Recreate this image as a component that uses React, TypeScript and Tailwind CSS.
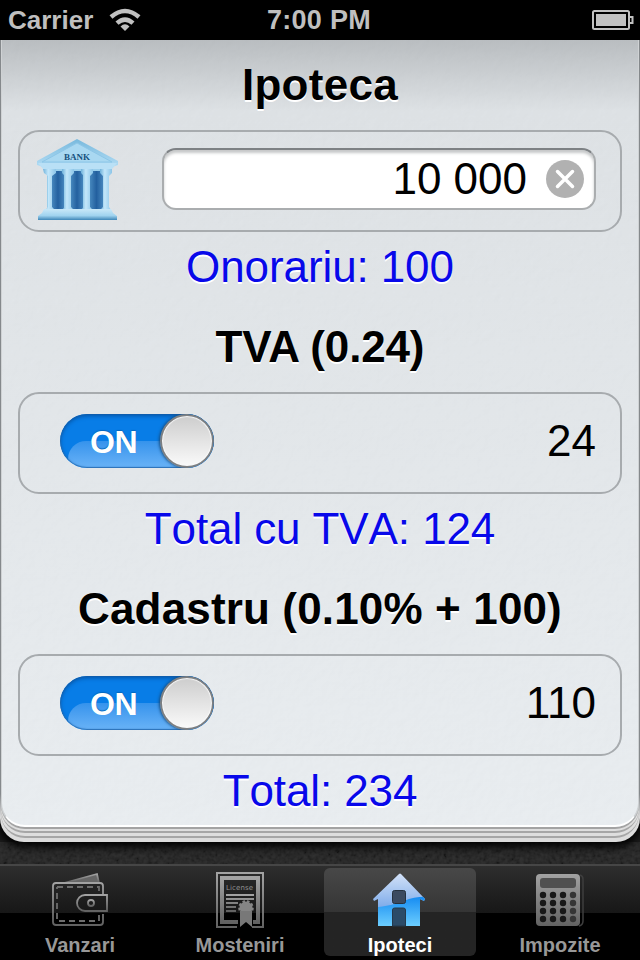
import { ReactNode, useState } from 'react';

interface TabItemProps {
  label: string;
  active: boolean;
  onSelect: () => void;
  children: ReactNode;
}

interface ToggleProps {
  on: boolean;
  onChange: (on: boolean) => void;
}

function StatusBar() {
  return (
    <header className="grid h-10 shrink-0 grid-cols-3 items-center bg-black text-[26px] font-bold leading-10 text-[#bfbfbf]">
      <div className="flex items-center gap-[15px] pl-2">
        <span>Carrier</span>
        <svg width="34" height="24" viewBox="0 0 34 24" fill="none" stroke="#c1c1c1" strokeWidth="4.500">
          <path d="M3 9Q17-3 31 9" />
          <path d="M9 15.200Q17 8 25 15.200" />
          <path d="M12.500 18.500Q17 14 21.500 18.500L17 23Z" fill="#c1c1c1" stroke="none" />
        </svg>
      </div>
      <span className="whitespace-nowrap pr-[2px] text-center text-[27px] tracking-[0.3px]">7:00 PM</span>
      <div className="flex justify-end pr-[6px]">
        <svg width="42" height="20" viewBox="0 0 42 20" fill="none" stroke="#c1c1c1">
          <rect x="1" y="1" width="36" height="18" rx="1.500" strokeWidth="2" />
          <rect x="4" y="4" width="30" height="12" fill="#c1c1c1" stroke="none" />
          <path d="M38 7h2.500v6H38" strokeWidth="2" />
        </svg>
      </div>
    </header>
  );
}

function BankIcon() {
  return (
    <svg width="84" height="84" viewBox="0 0 84 84">
      <defs>
        <linearGradient id="roof" x1="0" y1="0" x2="0" y2="1">
          <stop offset="0" stopColor="#78b9dd" />
          <stop offset="1" stopColor="#b1dcf4" />
        </linearGradient>
        <linearGradient id="column">
          <stop offset="0" stopColor="#6fb2db" />
          <stop offset=".4" stopColor="#c4e7fa" />
          <stop offset="1" stopColor="#8cc5e8" />
        </linearGradient>
        <linearGradient id="hall">
          <stop offset="0" stopColor="#4687bd" />
          <stop offset=".5" stopColor="#23609f" />
          <stop offset="1" stopColor="#4585bc" />
        </linearGradient>
        <linearGradient id="step" x1="0" y1="0" x2="0" y2="1">
          <stop offset="0" stopColor="#c9e8f8" />
          <stop offset=".6" stopColor="#a0d3ef" />
          <stop offset="1" stopColor="#3f86b8" />
        </linearGradient>
      </defs>
      <path d="M12 30h62v42H12z" fill="#9bcfec" />
      <g fill="url(#hall)">
        <rect x="17" y="33" width="12" height="39" rx="3" />
        <rect x="36" y="33" width="12" height="39" rx="3" />
        <rect x="55" y="33" width="13" height="39" rx="3" />
      </g>
      <g fill="url(#column)">
        <path d="M8 31h13v4l-4 3v31l3 3H10l3-3V38l-4-3z" />
        <path d="M27 31h12v4l-3 3v31l3 3H27l3-3V38l-3-3z" />
        <path d="M46 31h12v4l-3 3v31l3 3H46l3-3V38l-3-3z" />
        <path d="M65 31h12v4l-3 3v31l2 3H65l3-3V38l-3-3z" />
      </g>
      <path d="M42 1 83 23v4l-6 2H8l-6-2v-4z" fill="url(#roof)" />
      <path d="M42 5 77 24H7z" fill="#a9d8f1" stroke="#8cc6e7" />
      <path d="M3 25h79l-5 6H8z" fill="#b9e0f6" />
      <path d="M9 71h67l2 4 4 3v4H3v-4l4-3z" fill="url(#step)" />
      <text x="42" y="21.500" textAnchor="middle" className="fill-[#15517e] font-['Liberation_Serif',serif] text-[9px] font-bold">
        BANK
      </text>
    </svg>
  );
}

function Toggle({ on, onChange }: ToggleProps) {
  return (
    <button
      type="button"
      role="switch"
      aria-checked={on}
      onClick={() => onChange(!on)}
      className="relative flex h-[54px] w-[154px] items-center overflow-hidden rounded-full bg-[#087de7]"
    >
      <span className="absolute -right-10 bottom-0 left-2 h-[27px] rounded-tl-[18px] bg-linear-to-b from-[#3593ec] to-[#69b3f7]" />
      <span className="absolute inset-0 rounded-full shadow-[inset_0_2px_4px_#0455a8,inset_0_0_1px_1px_#3175b8]" />
      <span className="relative pl-[30px] pt-[2px] text-[32px] font-bold leading-none tracking-[-0.3px] text-white [text-shadow:0_-1px_1px_#0768bd]">
        {on ? 'ON' : 'OFF'}
      </span>
      <span className="absolute right-0 top-0 size-[54px] rounded-full border-2 border-[#7c7f82] bg-linear-to-b from-[#cdcdcd] to-[#fafafa] shadow-[inset_0_0_1px_1px_#f8f8f8,-1px_0_3px_#174b7b]" />
    </button>
  );
}

function Group({ children }: { children: ReactNode }) {
  return (
    <div className="flex h-[102px] items-center rounded-[21px] border-2 border-[#a7abae] text-[44px]">
      {children}
    </div>
  );
}

function Title({ children }: { children: ReactNode }) {
  return (
    <h2 className="text-center text-[44px] font-bold text-black [text-shadow:0_2px_0_#fff]">{children}</h2>
  );
}

function Result({ children }: { children: ReactNode }) {
  return (
    <p className="h-[71px] text-center text-[44px] leading-[70px] tracking-[-0.1px] text-[#0808ea] [font-kerning:none] [text-shadow:0_2px_0_#fff]">
      {children}
    </p>
  );
}

function WalletIcon() {
  return (
    <svg width="60" height="60" viewBox="0 0 60 60" fill="none" stroke="url(#tabGrey)" strokeWidth="1.800">
      <path d="m14 15 33-9 2 9z" fill="#666" />
      <path d="M53 27V18q0-3-3-3H6q-3 0-3 3v36q0 3 3 3h44q3 0 3-3v-8" />
      <path d="M7 19h42v8M49 47v6H7V19" strokeDasharray="6 4" stroke="#6d6d6d" />
      <path d="M57 27H35a8 8 0 0 0 0 16h22z" />
      <circle cx="41" cy="35" r="3" />
    </svg>
  );
}

function LicenseIcon() {
  return (
    <svg width="60" height="60" viewBox="0 0 60 60">
      <g fill="none" stroke="url(#tabGrey)">
        <path d="M42 59h11V5H7v54h20" strokeWidth="2" />
        <path d="M43 54h5V10H12v44h16" strokeWidth="4" />
        <path d="M16 27h28M16 31h28M16 35h12M16 39h10M16 43h10" strokeWidth="2" />
      </g>
      <text x="16" y="22" textLength="27" className="fill-[#929292] font-['DejaVu_Sans',sans-serif] text-[7px] font-normal">
        License
      </text>
      <circle cx="36" cy="40" r="6.500" fill="none" stroke="#858585" strokeWidth="2.500" strokeDasharray="2.5 1.9" />
      <circle cx="36" cy="40" r="6.500" fill="#858585" />
      <path d="M30 43h12v16l-6-5-6 5z" fill="#787878" />
    </svg>
  );
}

function HomeIcon() {
  return (
    <svg width="60" height="60" viewBox="0 0 60 60">
      <defs>
        <linearGradient id="homeTop" x1="0" y1="0" x2="0" y2="1">
          <stop stopColor="#e1ebfb" />
          <stop offset="1" stopColor="#4a8ae0" />
        </linearGradient>
        <linearGradient id="homeBottom" x1="0" y1="0" x2="0" y2="1">
          <stop stopColor="#168cf2" />
          <stop offset="1" stopColor="#72d2ff" />
        </linearGradient>
        <clipPath id="homeShape">
          <path d="M29 6q1-1 2 0l24 25-1 2-4-2v27H8V31l-4 2-1-2z" />
        </clipPath>
      </defs>
      <g clipPath="url(#homeShape)">
        <path d="M0 0h60v60H0z" fill="url(#homeTop)" />
        <path d="M0 40Q22 38 34 33T60 29v31H0z" fill="url(#homeBottom)" />
      </g>
      <rect x="22.500" y="22.500" width="13" height="13" rx="2" fill="#3b4a60" stroke="#25313f" />
      <path d="M22.500 58V42q0-2 2-2h9q2 0 2 2v16z" fill="#2b4b68" stroke="#25394b" />
    </svg>
  );
}

function CalculatorIcon() {
  return (
    <svg width="60" height="60" viewBox="0 0 60 60">
      <path d="M50 7q3 1 3 4v42q0 4-4 5" fill="none" stroke="#3e3e3e" strokeWidth="1.500" />
      <rect x="6" y="6" width="44" height="52" rx="4" fill="url(#tabGrey)" />
      <rect x="10" y="10" width="36" height="10" rx="3" fill="#505050" />
      {[27, 35, 43, 51].map((y) =>
        [13, 23, 33, 43].map((x) => (
          <circle key={`${x}-${y}`} cx={x} cy={y} r="3.200" fill={x === 43 ? '#353535' : '#181818'} />
        )),
      )}
    </svg>
  );
}

function TabItem({ label, active, onSelect, children }: TabItemProps) {
  return (
    <button
      type="button"
      onClick={onSelect}
      className={`flex h-[88px] flex-col items-center rounded-[6px] text-[20px] font-bold leading-[26px]
        ${active ? 'bg-linear-to-b from-[#484848] from-0% via-[#353535] via-50% to-[#242424] to-50% text-white' : 'text-[#989898]'}
      `}
    >
      <span className="h-[60px]">{children}</span>
      <span className="pt-1">{label}</span>
    </button>
  );
}

const tabs = [
  { label: 'Vanzari', icon: <WalletIcon /> },
  { label: 'Mosteniri', icon: <LicenseIcon /> },
  { label: 'Ipoteci', icon: <HomeIcon /> },
  { label: 'Impozite', icon: <CalculatorIcon /> },
];

export default function App() {
  const [amount, setAmount] = useState('10 000');
  const [vat, setVat] = useState(true);
  const [cadastre, setCadastre] = useState(true);
  const [tab, setTab] = useState('Ipoteci');

  const value = Number(amount.replace(/\s/g, '')) || 0;
  const fee = Math.round(value * 0.01);
  const vatAmount = vat ? Math.round(fee * 0.24) : 0;
  const cadastreAmount = cadastre ? Math.round(value * 0.001) + 100 : 0;

  return (
    <div className="flex h-[960px] w-[640px] flex-col overflow-hidden bg-[#1c1c1c] font-['Liberation_Sans',Arial,sans-serif]">
      <StatusBar />

      {/* page stack */}
      <div className="relative z-10 h-[802px] shrink-0 rounded-b-[24px] bg-linear-to-b from-[#85898c] from-94% to-[#dcdcdc] to-97% px-px shadow-[0_3px_9px_2px_#000]">
        <div className="h-[798px] rounded-b-[24px] border-b-2 border-[#a6a6a6] bg-[#dedede]">
          <div className="h-[793px] rounded-b-[24px] border-b-2 border-[#a6a6a6] bg-[#dedede]">
            <div className="h-[789px] rounded-b-[24px] border-b-2 border-[#a3a3a3] bg-[#b9bdc0]">
              <main className="relative h-[787px] rounded-b-[24px] border-x border-b-2 border-b-white border-l-[#cfd2d4] border-r-[#cfd2d4] bg-linear-to-b from-[#b6babd] via-[#dde1e4] via-[9%] to-[#e9edf0] px-4">
                <svg className="pointer-events-none absolute inset-0 size-full rounded-b-[22px] opacity-[0.07]">
                  <filter id="paper">
                    <feTurbulence type="fractalNoise" baseFrequency=".13" numOctaves="3" />
                    <feDiffuseLighting surfaceScale=".9" lightingColor="#f5faff">
                      <feDistantLight azimuth="225" elevation="60" />
                    </feDiffuseLighting>
                  </filter>
                  <rect width="100%" height="100%" filter="url(#paper)" />
                </svg>
                <div className="relative">
                  <div className="h-[90px] leading-[90px] tracking-[0.3px]">
                    <Title>Ipoteca</Title>
                  </div>
                  <Group>
                    <div className="pb-[3px] pl-[15px]">
                      <BankIcon />
                    </div>
                    <div className="mb-1 ml-auto mr-6 flex h-[62px] w-[434px] items-center rounded-[14px] border-2 border-[#aaadaf] border-t-[#7d8184] bg-white pr-[10px] shadow-[inset_0_3px_3px_#c6c8c9]">
                      <input
                        aria-label="Ipoteca"
                        value={amount}
                        onChange={(e) => setAmount(e.target.value)}
                        className="min-w-0 flex-1 bg-transparent pr-[19px] text-right text-[44px] leading-[54px] text-black outline-none"
                      />
                      <button type="button" aria-label="Clear" onClick={() => setAmount('')}>
                        <svg width="38" height="38" viewBox="0 0 38 38">
                          <circle cx="19" cy="19" r="19" fill="#b1b1b1" />
                          <path d="m11.500 11.500 15 15m0-15-15 15" stroke="#fff" strokeWidth="3.500" strokeLinecap="round" />
                        </svg>
                      </button>
                    </div>
                  </Group>
                  <Result>Onorariu: {fee}</Result>

                  <div className="mb-[2px] h-[87px] leading-[87px] tracking-[-0.15px]">
                    <Title>TVA (0.24)</Title>
                  </div>
                  <Group>
                    <div className="pb-1 pl-10">
                      <Toggle on={vat} onChange={setVat} />
                    </div>
                    <span className="ml-auto pb-[4px] pr-6">{vatAmount}</span>
                  </Group>
                  <Result>Total cu TVA: {fee + vatAmount}</Result>

                  <div className="mb-[2px] h-[87px] leading-[87px] tracking-[0.15px]">
                    <Title>Cadastru (0.10% + 100)</Title>
                  </div>
                  <Group>
                    <div className="pb-1 pl-10">
                      <Toggle on={cadastre} onChange={setCadastre} />
                    </div>
                    <span className="ml-auto pb-[4px] pr-6">{cadastreAmount}</span>
                  </Group>
                  <Result>Total: {fee + vatAmount + cadastreAmount}</Result>
                </div>
              </main>
            </div>
          </div>
        </div>
      </div>

      {/* leather strip */}
      <div className="h-[22px] shrink-0">
        <svg className="size-full opacity-15">
          <filter id="leather">
            <feTurbulence type="fractalNoise" baseFrequency=".25" numOctaves="2" />
            <feColorMatrix values=".6 0 0 0 -.1 .6 0 0 0 -.1 .6 0 0 0 -.1 0 0 0 0 1" />
          </filter>
          <rect width="100%" height="100%" filter="url(#leather)" />
        </svg>
      </div>

      <nav className="relative z-20 grid h-24 shrink-0 grid-cols-4 gap-x-2 border-t-2 border-[#464646] bg-linear-to-b from-[#2e2e2e] from-0% via-[#171717] via-50% to-black to-50% px-1 pt-[2px]">
        <svg className="absolute size-0">
          <linearGradient id="tabGrey" x1="0" y1="0" x2="0" y2="1">
            <stop stopColor="#a2a2a2" />
            <stop offset="1" stopColor="#626262" />
          </linearGradient>
        </svg>
        {tabs.map(({ label, icon }) => (
          <TabItem key={label} label={label} active={tab === label} onSelect={() => setTab(label)}>
            {icon}
          </TabItem>
        ))}
      </nav>
    </div>
  );
}
